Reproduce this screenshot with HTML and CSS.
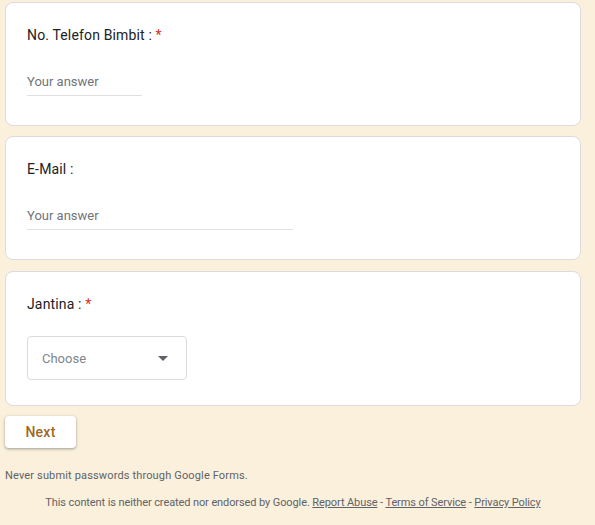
FILE: index.html
```html
<!DOCTYPE html>
<html>
<head>
<meta charset="utf-8">
<link rel="stylesheet" href="styles.css">
</head>
<body>
<div class="page">
  <div class="card card-first">
    <div class="title">No. Telefon Bimbit : <span class="req">*</span></div>
    <div class="answer short">Your answer</div>
  </div>
  <div class="card">
    <div class="title">E-Mail :</div>
    <div class="answer long">Your answer</div>
  </div>
  <div class="card card-select">
    <div class="title">Jantina : <span class="req">*</span></div>
    <div class="select">
      <span class="select-text">Choose</span>
      <svg class="arrow" width="10" height="5" viewBox="0 0 10 5"><path d="M0 0h10L5 5z" fill="#5f6368"/></svg>
    </div>
  </div>
  <div class="actions">
    <button class="next">Next</button>
  </div>
  <div class="warning">Never submit passwords through Google Forms.</div>
  <div class="footer">This content is neither created nor endorsed by Google. <a>Report Abuse</a> - <a>Terms of Service</a> - <a>Privacy Policy</a></div>
</div>
</body>
</html>
```
FILE: styles.css
```css
html, body {
  margin: 0;
  padding: 0;
  background: #faf0dc;
}
body {
  font-family: Roboto, "Liberation Sans", Arial, sans-serif;
}
.page {
  padding: 2px 14px 0 5px;
  display: flex;
  flex-direction: column;
}
.card {
  background: #fff;
  border: 1px solid #dadce0;
  border-radius: 8px;
  padding: 22px 21px 29px;
  margin-bottom: 11px;
  display: flex;
  flex-direction: column;
  align-items: flex-start;
}
.card-first {
  margin-bottom: 10px;
}
.title {
  font-size: 14px;
  line-height: 20px;
  color: #202124;
  letter-spacing: 0.15px;
}
.req {
  color: #d93025;
}
.answer {
  margin-top: 27px;
  font-size: 13px;
  line-height: 20px;
  color: #70757a;
  padding-bottom: 3px;
  border-bottom: 1px solid #e0e0e0;
}
.answer.short { width: 115px; }
.answer.long { width: 266px; }
.card-select {
  padding-bottom: 25px;
  margin-bottom: 10px;
}
.select {
  margin-top: 22px;
  height: 42px;
  border: 1px solid #dadce0;
  border-radius: 4px;
  display: flex;
  align-items: center;
  justify-content: space-between;
  padding: 0 18px 0 14px;
  box-sizing: content-box;
  width: 126px;
}
.select-text {
  font-size: 13px;
  color: #80868b;
}
.arrow {
  display: block;
  margin-top: 1px;
}
.next {
  width: 71px;
  height: 32px;
  background: #fff;
  border: none;
  border-radius: 4px;
  box-shadow: 0 1px 2px rgba(60,64,67,0.3), 0 1px 3px 1px rgba(60,64,67,0.15);
  font-family: Roboto, "Liberation Sans", Arial, sans-serif;
  font-size: 14px;
  font-weight: 500;
  color: #a0681e;
  letter-spacing: 0.25px;
  padding: 0;
}
.warning {
  margin-top: 20px;
  font-size: 11px;
  line-height: 16px;
  color: #5f6368;
  letter-spacing: 0.15px;
}
.footer {
  margin-top: 11px;
  font-size: 11px;
  line-height: 16px;
  color: #5f6368;
  text-align: center;
  letter-spacing: -0.1px;
}
.footer a {
  color: #5f6368;
  text-decoration: underline;
}
```
